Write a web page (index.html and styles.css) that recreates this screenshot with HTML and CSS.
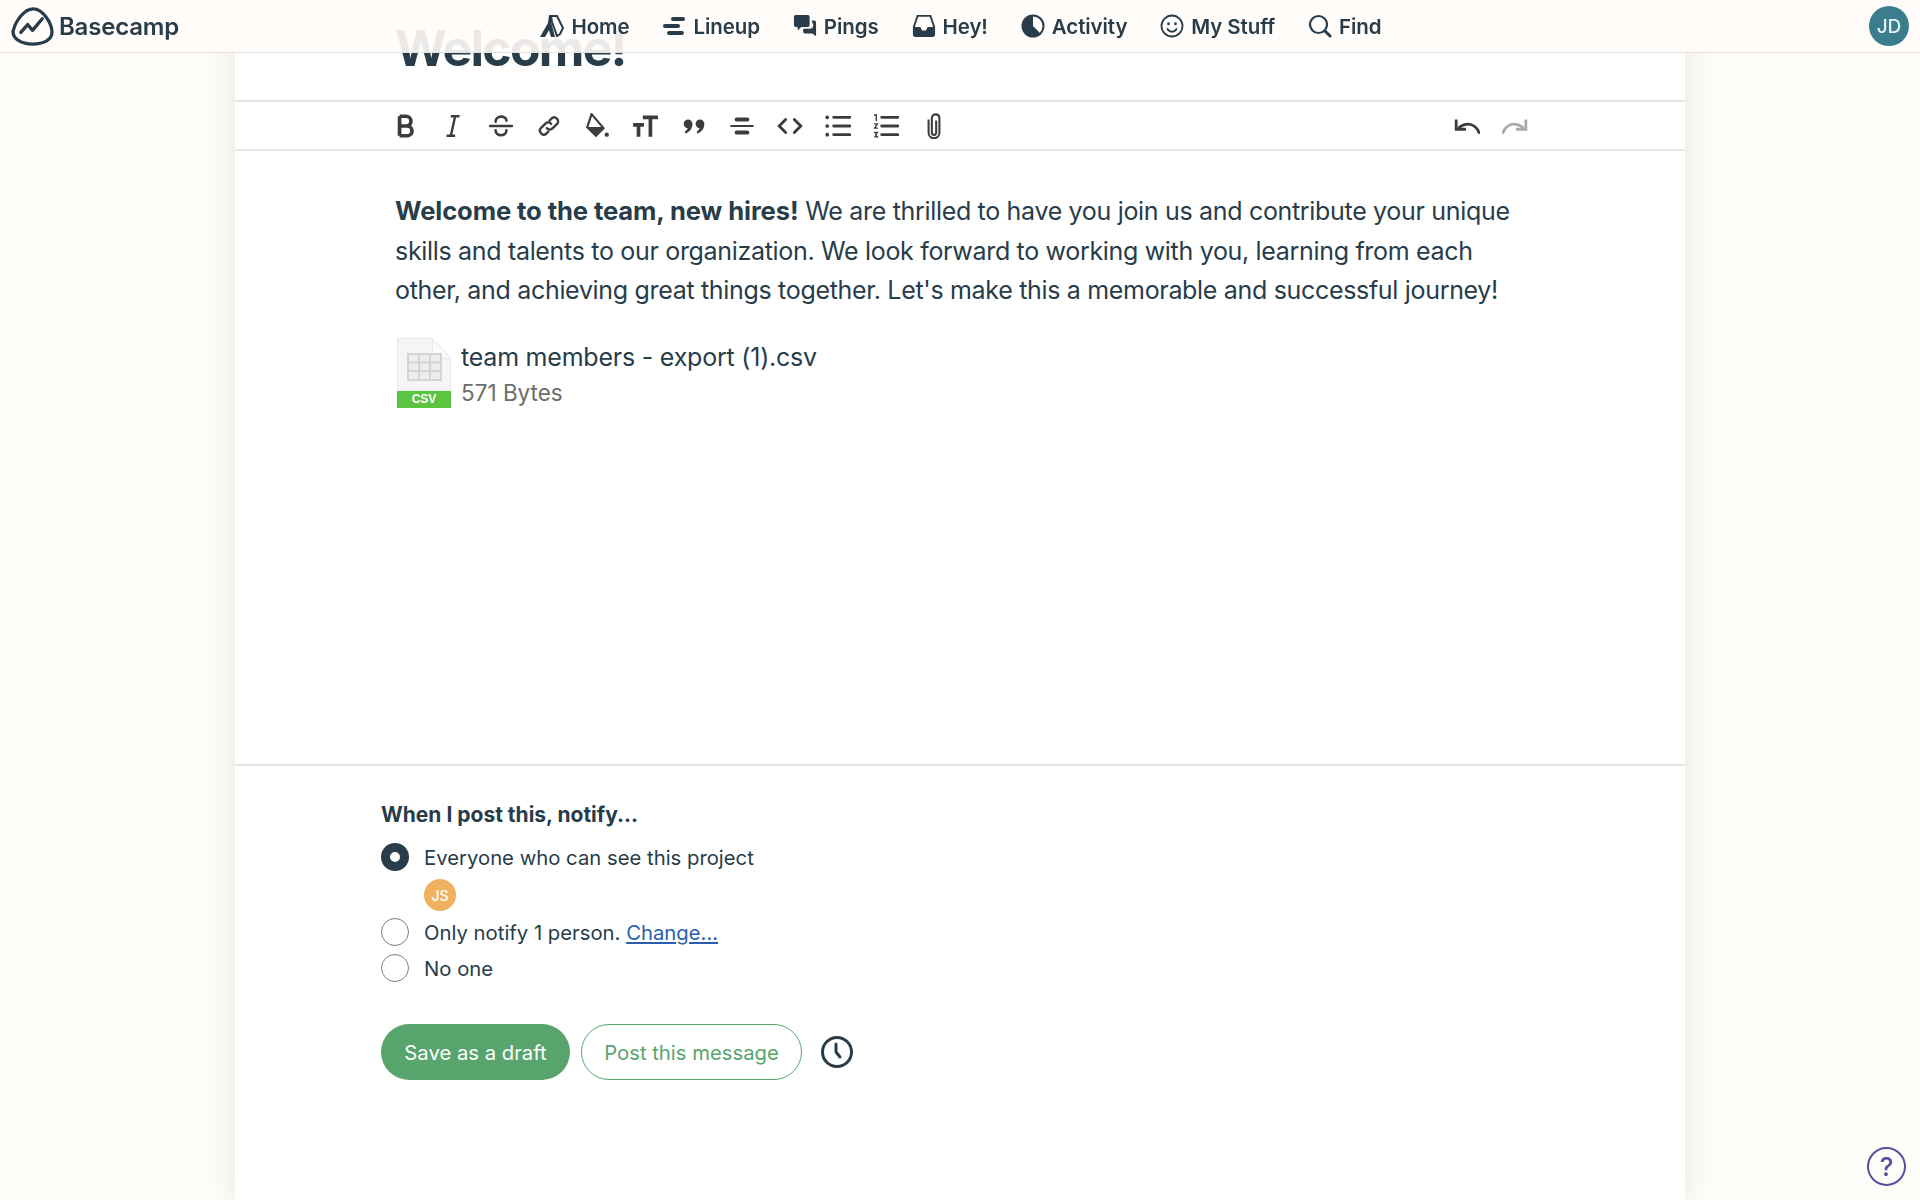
FILE: index.html
```html
<!DOCTYPE html>
<html lang="en">
<head>
  <meta charset="UTF-8">
  <title>Basecamp - New message</title>
  <link rel="stylesheet" href="styles.css">
</head>
<body>
  <nav class="nav">
    <a class="logo">
      <svg class="logo-icon" viewBox="0 0 44 40" fill="none" stroke="#283c4a" stroke-width="3.4" stroke-linecap="round" stroke-linejoin="round">
        <path d="M2 25C5 13 14 2 23 2c9 0 19 14 19 24 0 8-9 12-20 12C11 38 2 33 2 25z"/>
        <path d="M10 26l7-8 5 6 10-12"/>
      </svg>
      <span>Basecamp</span>
    </a>
    <div class="nav-items">
      <a class="nav-item">
        <svg class="nav-icon nav-icon-home" viewBox="0 0 26 24"><path fill="#283c4a" d="M10 1l3 1-1 6 4 15h-4l-2-7-4 7H1l8-14z"/><path fill="none" stroke="#283c4a" stroke-width="2" d="M12 2h6l6 12-3 6-3 2-5-14z"/></svg>
        Home
      </a>
      <a class="nav-item">
        <svg class="nav-icon" viewBox="0 0 24 24" stroke="#283c4a" stroke-width="4" stroke-linecap="round"><path d="M11 5h10M3 12h13M7 19h13"/></svg>
        Lineup
      </a>
      <a class="nav-item">
        <svg class="nav-icon" viewBox="0 0 26 26" fill="#283c4a"><path d="M3 1h13a2 2 0 0 1 2 2v9a2 2 0 0 1-2 2H9l-4 4v-4H3a2 2 0 0 1-2-2V3a2 2 0 0 1 2-2z"/><path d="M20 7h3a2 2 0 0 1 2 2v15l-4-3h-8a2 2 0 0 1-2-2v-3h7a4 4 0 0 0 4-4z"/></svg>
        Pings
      </a>
      <a class="nav-item">
        <svg class="nav-icon" viewBox="0 0 26 26"><path fill="none" stroke="#283c4a" stroke-width="2" d="M6 2h14l4 12v8a2 2 0 0 1-2 2H4a2 2 0 0 1-2-2v-8z"/><path fill="#283c4a" d="M2 14h7l2 4h4l2-4h7v8a2 2 0 0 1-2 2H4a2 2 0 0 1-2-2z"/></svg>
        Hey!
      </a>
      <a class="nav-item">
        <svg class="nav-icon" viewBox="0 0 24 24"><circle cx="12" cy="12" r="10.5" fill="none" stroke="#283c4a" stroke-width="2"/><path fill="#283c4a" d="M12 1a11 11 0 1 0 8 19l-8-8z"/></svg>
        Activity
      </a>
      <a class="nav-item">
        <svg class="nav-icon" viewBox="0 0 24 24" fill="none" stroke="#283c4a" stroke-width="1.8" stroke-linecap="round"><circle cx="12" cy="12" r="10.5"/><path d="M7.5 15c2 3.5 7 3.5 9 0"/><path stroke-width="2.6" d="M8.5 9.5v.5M15.5 9.5v.5"/></svg>
        My Stuff
      </a>
      <a class="nav-item">
        <svg class="nav-icon" viewBox="0 0 24 24" fill="none" stroke="#283c4a" stroke-width="2.2" stroke-linecap="round"><circle cx="10.5" cy="10.5" r="8.5"/><path stroke-width="3" d="M17 17l5 5"/></svg>
        Find
      </a>
    </div>
    <div class="nav-right">
      <span class="avatar-jd">JD</span>
    </div>
  </nav>

  <main class="card">
    <h1 class="title">Welcome!</h1>

    <div class="toolbar">
      <div class="tool-group">
        <svg class="tool" viewBox="0 0 24 24"><path fill="none" stroke="#3c3c3c" stroke-width="3.4" d="M7 3v18M7 3h6a4.500 4.500 0 0 1 0 9H7m0 0h7a4.500 4.500 0 0 1 0 9H7"/></svg>
        <svg class="tool" viewBox="0 0 24 24" fill="none" stroke="#3c3c3c" stroke-width="2.2"><path d="M10 3h8M6 21h8"/><path d="M14 3l-4 18"/></svg>
        <svg class="tool" viewBox="0 0 24 24" fill="none" stroke="#3c3c3c" stroke-width="2.4" stroke-linecap="round"><path d="M2 12h20"/><path d="M7 8c0-6 10-6 10-1M7 16c0 6 10 6 10 0"/></svg>
        <svg class="tool" viewBox="0 0 24 24" fill="none" stroke="#3c3c3c" stroke-width="2.2" stroke-linecap="round"><path d="M10 14c2 2 4 1.500 5.500 0l4-4c3-3-2-8-5-5l-2 2"/><path d="M14 10c-2-2-4-1.500-5.500 0l-4 4c-3 3 2 8 5 5l2-2"/></svg>
        <svg class="tool" viewBox="0 0 24 24"><path fill="none" stroke="#3c3c3c" stroke-width="2" d="M7 1l11 13-7 7-8-8z"/><path fill="#3c3c3c" d="M3 13h15l-7 8z"/><circle cx="21" cy="20" r="2" fill="#3c3c3c"/></svg>
        <svg class="tool" viewBox="0 0 24 24" fill="none" stroke="#3c3c3c" stroke-width="3.4"><path d="M1 11h10M6 11v11"/><path d="M10 4h14M17 4v18"/></svg>
        <svg class="tool" viewBox="0 0 24 24" fill="#3c3c3c"><circle cx="6.500" cy="10" r="4"/><path d="M10.500 10c0 5-3 8-6.500 9l-.5-2c2-1 3-2.500 3-5z"/><circle cx="17.500" cy="10" r="4"/><path d="M21.500 10c0 5-3 8-6.500 9l-.5-2c2-1 3-2.500 3-5z"/></svg>
        <svg class="tool" viewBox="0 0 24 24" fill="none" stroke="#3c3c3c" stroke-linecap="round"><path stroke-width="3.600" d="M7 6h10M7 18h10"/><path stroke-width="2" d="M2 12h20"/></svg>
        <svg class="tool" viewBox="0 0 24 24" fill="none" stroke="#3c3c3c" stroke-width="2.600" stroke-linecap="round"><path d="M8 6l-6 6 6 6M16 6l6 6-6 6"/></svg>
        <svg class="tool" viewBox="0 0 24 24" fill="none" stroke="#3c3c3c" stroke-width="2.600" stroke-linecap="round"><path d="M8 4h15M8 12h15M8 20h15"/><path stroke-width="3.400" d="M2 4h.1M2 12h.1M2 20h.1"/></svg>
        <svg class="tool" viewBox="0 0 24 24" fill="none" stroke="#3c3c3c" stroke-width="2.600" stroke-linecap="round"><path d="M8 4h15M8 12h15M8 20h15"/><path stroke-width="1.300" d="M1.500 2L3 1.500V7M1.500 10h2.500l-2.500 4h2.500M1.500 18h2.500l-1.500 2 1.500 2h-2.500"/></svg>
        <svg class="tool" viewBox="0 0 24 24" fill="none" stroke="#3c3c3c" stroke-width="1.900"><path d="M7 6v12c0 7 10 7 10 0V5c0-5-7-5-7 0v13c0 3 4 3 4 0V7"/></svg>
      </div>
      <div class="tool-group">
        <svg class="tool" viewBox="0 0 24 24" fill="none" stroke="#3c3c3c" stroke-width="2.600" stroke-linecap="round"><path d="M23 18c-3-8-11-10-18-5"/><path d="M2 6v9h9" stroke-linecap="butt"/></svg>
        <svg class="tool" viewBox="0 0 24 24" fill="none" stroke="#a9a9a9" stroke-width="2.600" stroke-linecap="round"><path d="M1 18c3-8 11-10 18-5"/><path d="M22 6v9h-9" stroke-linecap="butt"/></svg>
      </div>
    </div>

    <section class="editor">
      <p class="body-text"><strong>Welcome to the team, new hires!</strong> We are thrilled to have you join us and contribute your unique skills and talents to our organization. We look forward to working with you, learning from each other, and achieving great things together. Let's make this a memorable and successful journey!</p>
      <div class="attachment">
        <div class="file-icon">
          <svg class="file-sheet" viewBox="0 0 54 53">
            <path fill="#f5f5f5" stroke="#e8e8e8" d="M.5.500h35l18 20v32H.5z"/>
            <path fill="#fbfbfb" stroke="#e8e8e8" d="M35.500.500v20h18z"/>
            <path fill="#eeeeee" stroke="#d4d4d4" stroke-width="2" d="M11 16h33v26H11zM11 24.500h33M11 33h33M22 16v26M33 16v26"/>
          </svg>
          <span class="file-label">CSV</span>
        </div>
        <div class="file-info">
          <div class="file-name">team members - export (1).csv</div>
          <div class="file-size">571 Bytes</div>
        </div>
      </div>
    </section>

    <section class="notify">
      <h2 class="notify-title">When I post this, notify...</h2>
      <div class="option option-first">
        <span class="radio radio-on"></span>
        <span>Everyone who can see this project</span>
      </div>
      <div class="people"><span class="avatar-js">JS</span></div>
      <div class="option">
        <span class="radio"></span>
        <span>Only notify 1 person. <a class="change">Change...</a></span>
      </div>
      <div class="option">
        <span class="radio"></span>
        <span>No one</span>
      </div>
      <div class="actions">
        <button class="btn btn-solid">Save as a draft</button>
        <button class="btn btn-outline">Post this message</button>
        <svg class="clock" viewBox="0 0 32 32" fill="none" stroke="#283c4a" stroke-linecap="round"><circle cx="16" cy="16" r="14.500" stroke-width="3"/><path stroke-width="3" d="M15 8v8l4 5"/></svg>
      </div>
    </section>
  </main>

  <a class="help">?</a>
</body>
</html>
```

FILE: styles.css
```css
:root {
  --ink: #283c4a;
  --page: #fffdf9;
  --line: #e6e6e6;
  --green: #57a56d;
}

* {
  box-sizing: border-box;
}

html, body {
  height: 100%;
}

body {
  margin: 0;
  overflow: hidden;
  background: var(--page);
  color: var(--ink);
  font-family: Inter, "Liberation Sans", sans-serif;
}

/* nav floats over the page, title shows through it */
.nav {
  position: fixed;
  top: 0;
  left: 0;
  right: 0;
  height: 53px;
  display: grid;
  grid-template-columns: 1fr auto 1fr;
  align-items: center;
  padding: 0 11px;
  background: rgba(255, 252, 249, 0.9);
  border-bottom: 1px solid #e3e2df;
  z-index: 10;
}

.logo {
  display: flex;
  align-items: center;
  gap: 5px;
  font-size: 24px;
  font-weight: 600;
  letter-spacing: -0.2px;
}

.logo-icon {
  width: 43px;
  height: 39px;
}

.nav-items {
  display: flex;
  gap: 33px;
}

.nav-item {
  display: flex;
  align-items: center;
  gap: 7px;
  font-size: 20.500px;
  font-weight: 600;
  letter-spacing: -0.1px;
}

.nav-icon {
  width: 24px;
  height: 24px;
}

.nav-icon-home {
  width: 26px;
}

.nav-right {
  display: flex;
  justify-content: flex-end;
}

.avatar-jd {
  width: 40px;
  height: 40px;
  border-radius: 50%;
  background: #3b7d8c;
  color: #e8f3f3;
  font-size: 19px;
  font-weight: 500;
  display: flex;
  align-items: center;
  justify-content: center;
}

.card {
  width: 1450px;
  min-height: 100vh;
  margin: 0 auto;
  background: #fff;
  box-shadow: 0 0 30px rgba(60, 50, 30, 0.12);
}

.title {
  margin: 0;
  height: 102px;
  padding: 15px 0 0 160px;
  font-size: 50px;
  line-height: 66px;
  font-weight: 700;
  letter-spacing: -1.800px;
  border-bottom: 2px solid var(--line);
}

.toolbar {
  height: 49px;
  display: flex;
  justify-content: space-between;
  align-items: center;
  padding: 0 157px 0 157px;
  border-bottom: 2px solid var(--line);
}

.tool-group {
  display: flex;
  gap: 22.100px;
}

.tool {
  width: 26px;
  height: 26px;
}

.editor {
  height: 615px;
  padding: 40px 160px 0;
  border-bottom: 2px solid var(--line);
}

.body-text {
  margin: 0;
  font-size: 25px;
  line-height: 39.700px;
  letter-spacing: -0.320px;
}

.body-text strong {
  font-size: 25.600px;
  letter-spacing: -0.100px;
}

.attachment {
  display: flex;
  gap: 10px;
  margin: 27px 0 0 2px;
}

.file-icon {
  position: relative;
  width: 54px;
  height: 70px;
}

.file-sheet {
  display: block;
  width: 54px;
  height: 53px;
}

.file-label {
  display: block;
  height: 17px;
  background: #5bc440;
  color: #fff;
  font-family: "Liberation Sans", sans-serif;
  font-size: 12px;
  font-weight: 700;
  line-height: 17px;
  text-align: center;
}

.file-name {
  font-size: 25px;
  line-height: 38px;
  letter-spacing: -0.220px;
}

.file-size {
  font-size: 22.500px;
  line-height: 34px;
  color: #6d6d6d;
}

.notify {
  padding: 36px 0 0 146px;
}

.notify-title {
  margin: 0 0 11px;
  font-size: 21px;
  line-height: 26px;
  font-weight: 700;
}

.option {
  display: flex;
  align-items: center;
  gap: 15px;
  height: 36px;
  font-size: 20.300px;
}

.people {
  height: 39px;
  padding: 4px 0 0 43px;
}

.avatar-js {
  width: 32px;
  height: 32px;
  border-radius: 50%;
  background: #efb15f;
  color: #fff;
  font-size: 14px;
  font-weight: 500;
  display: flex;
  align-items: center;
  justify-content: center;
}

.radio {
  width: 28px;
  height: 28px;
  border-radius: 50%;
  border: 1.500px solid #7d7d7d;
  background: #fff;
}

.radio-on {
  border: 9px solid var(--ink);
}

.change {
  color: #2a5db0;
  text-decoration: underline;
}

.actions {
  display: flex;
  align-items: center;
  gap: 11px;
  margin-top: 38px;
}

.btn {
  height: 56px;
  border-radius: 28px;
  font-family: inherit;
  font-size: 20.300px;
  padding: 0;
}

.btn-solid {
  width: 189px;
  background: var(--green);
  border: none;
  color: #fff;
}

.btn-outline {
  width: 221px;
  background: #fff;
  border: 1.500px solid var(--green);
  color: var(--green);
}

.clock {
  width: 32px;
  height: 32px;
  margin-left: 8px;
}

.help {
  position: fixed;
  right: 14px;
  bottom: 14px;
  width: 39px;
  height: 39px;
  border-radius: 50%;
  border: 2.500px solid #5b4e9e;
  color: #5b4e9e;
  font-size: 26px;
  font-weight: 500;
  display: flex;
  align-items: center;
  justify-content: center;
}
```
